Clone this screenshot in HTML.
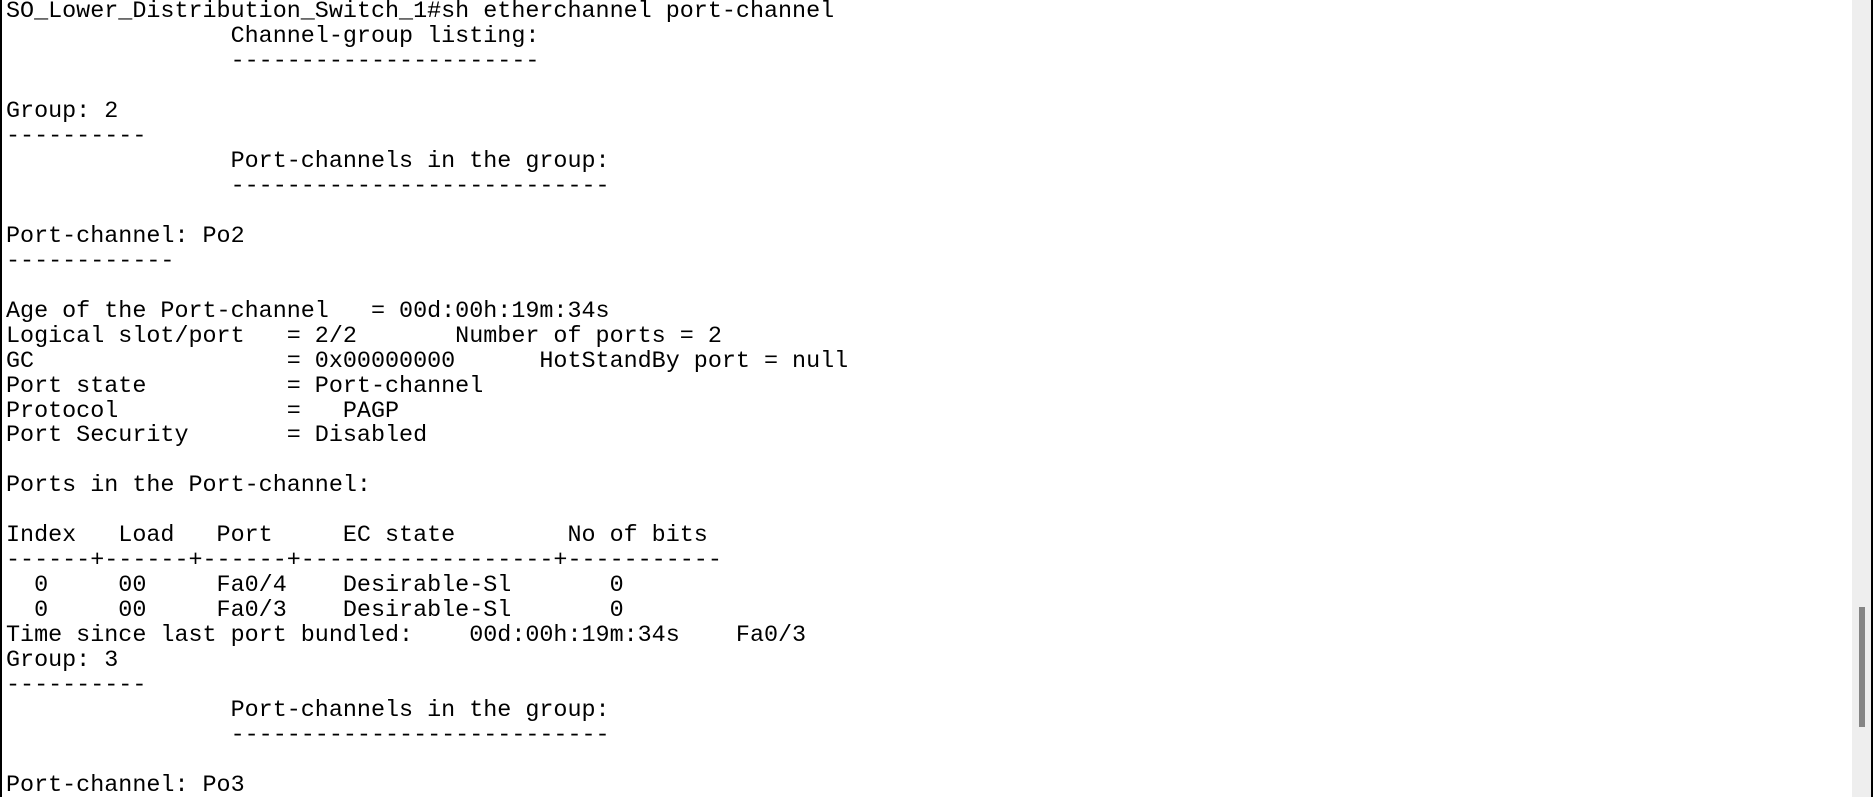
<!DOCTYPE html>
<html><head><meta charset="utf-8"><style>
html,body{margin:0;padding:0;background:#fff;width:1873px;height:797px;overflow:hidden}
.lb{position:absolute;left:0;top:0;width:2px;height:797px;background:#000}
pre{position:absolute;left:6px;top:0px;margin:0;font-family:"Liberation Mono",monospace;font-size:23.4px;line-height:24.97px;color:#000;letter-spacing:0}
.track{position:absolute;left:1852px;top:0;width:20px;height:797px;background:#eeeeee}
.edge{position:absolute;left:1871px;top:0;width:2px;height:797px;background:#000}
.thumb{position:absolute;left:1859px;top:607px;width:6px;height:120px;background:#858585}
</style></head><body>
<div class="lb"></div>
<pre>SO_Lower_Distribution_Switch_1#sh etherchannel port-channel
                Channel-group listing:
                ----------------------

Group: 2
----------
                Port-channels in the group:
                ---------------------------

Port-channel: Po2
------------

Age of the Port-channel   = 00d:00h:19m:34s
Logical slot/port   = 2/2       Number of ports = 2
GC                  = 0x00000000      HotStandBy port = null
Port state          = Port-channel
Protocol            =   PAGP
Port Security       = Disabled

Ports in the Port-channel:

Index   Load   Port     EC state        No of bits
------+------+------+------------------+-----------
  0     00     Fa0/4    Desirable-Sl       0
  0     00     Fa0/3    Desirable-Sl       0
Time since last port bundled:    00d:00h:19m:34s    Fa0/3
Group: 3
----------
                Port-channels in the group:
                ---------------------------

Port-channel: Po3</pre>
<div class="track"></div>
<div class="edge"></div>
<div class="thumb"></div>
</body></html>
